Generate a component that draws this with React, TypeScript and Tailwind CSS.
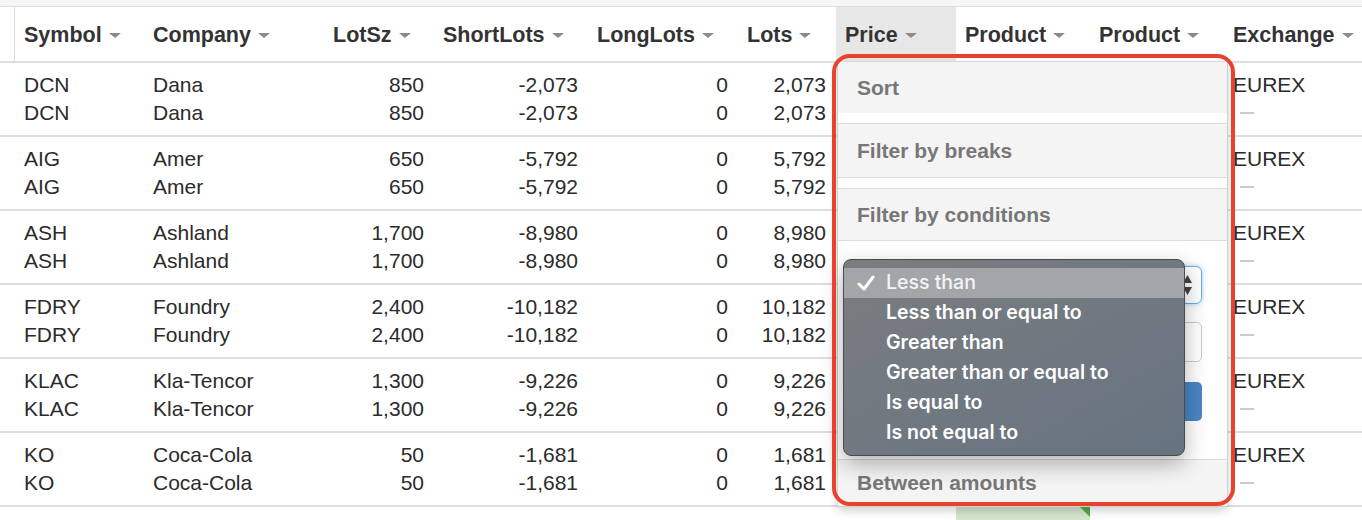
import React from "react";

type Col = { key: string; label: string; w: string; num?: boolean };

const COLS: Col[] = [
  { key: "sym", label: "Symbol", w: "w-[129px]" },
  { key: "co", label: "Company", w: "w-[180px]" },
  { key: "lot", label: "LotSz", w: "w-[110px]", num: true },
  { key: "short", label: "ShortLots", w: "w-[154px]", num: true },
  { key: "long", label: "LongLots", w: "w-[150px]", num: true },
  { key: "lots", label: "Lots", w: "w-[98px]", num: true },
  { key: "price", label: "Price", w: "w-[120px]", num: true },
  { key: "p1", label: "Product", w: "w-[134px]" },
  { key: "p2", label: "Product", w: "w-[134px]" },
  { key: "ex", label: "Exchange", w: "w-[138px]" },
];

type Row = Record<string, string>;

const ROWS: Row[] = [
  { sym: "DCN", co: "Dana", lot: "850", short: "-2,073", long: "0", lots: "2,073" },
  { sym: "AIG", co: "Amer", lot: "650", short: "-5,792", long: "0", lots: "5,792" },
  { sym: "ASH", co: "Ashland", lot: "1,700", short: "-8,980", long: "0", lots: "8,980" },
  { sym: "FDRY", co: "Foundry", lot: "2,400", short: "-10,182", long: "0", lots: "10,182" },
  { sym: "KLAC", co: "Kla-Tencor", lot: "1,300", short: "-9,226", long: "0", lots: "9,226" },
  { sym: "KO", co: "Coca-Cola", lot: "50", short: "-1,681", long: "0", lots: "1,681" },
];

const OPTIONS = [
  "Less than",
  "Less than or equal to",
  "Greater than",
  "Greater than or equal to",
  "Is equal to",
  "Is not equal to",
];

function Caret() {
  return (
    <span className="ml-[7px] inline-block h-0 w-0 border-x-[6px] border-t-[5px] border-x-transparent border-t-[#8a8a8a]" />
  );
}

function HeaderRow() {
  return (
    <div className="flex h-[56px] border-b-2 border-[#dedede] bg-white">
      <div className="w-[15px] shrink-0 border-r border-[#dcdcdc]" />
      {COLS.map((c) => (
        <div
          key={c.key}
          className={`${c.w} flex shrink-0 items-center pl-[9px] pt-[2px] text-[21.5px] font-bold text-[#333] ${
            c.key === "price" ? "bg-[#e7e7e7]" : ""
          }`}
        >
          {c.label}
          <Caret />
        </div>
      ))}
    </div>
  );
}

function Group({ row }: { row: Row }) {
  return (
    <div className="flex border-b-2 border-[#dedede] py-[8px] text-[21px] leading-[28px] text-[#2b2b2b]">
      <div className="w-[15px] shrink-0" />
      {COLS.map((c) => (
        <div
          key={c.key}
          className={`${c.w} shrink-0 ${c.num ? "pr-[10px] text-right" : "pl-[9px]"}`}
        >
          {c.key === "ex" ? (
            <>
              <div>EUREX</div>
              <div className="flex h-[28px] items-center">
                <span className="ml-[7px] h-[2px] w-[14px] bg-[#cacaca]" />
              </div>
            </>
          ) : (
            <>
              <div>{row[c.key] ?? "\u00a0"}</div>
              <div>{row[c.key] ?? "\u00a0"}</div>
            </>
          )}
        </div>
      ))}
    </div>
  );
}

function Section({ title, h }: { title: string; h: string }) {
  return (
    <div className={`${h} flex items-center bg-[#f4f4f4] pl-[19px] text-[21px] font-bold text-[#777]`}>
      {title}
    </div>
  );
}

function FilterMenu() {
  return (
    <div className="absolute left-[837px] top-[62px] z-10 w-[391px] rounded-b-[6px] border border-t-0 border-[#cfcfcf] bg-white shadow-[0_4px_10px_rgba(0,0,0,0.18)]">
      <Section title="Sort" h="h-[51px]" />
      <div className="h-[11px] border-b border-[#dcdcdc]" />
      <Section title="Filter by breaks" h="h-[53px]" />
      <div className="h-[12px] border-y border-[#dcdcdc]" />
      <Section title="Filter by conditions" h="h-[51px]" />
      <div className="flex h-[220px] flex-col border-y border-[#dcdcdc] pl-[8px] pr-[25px]">
        <div className="mt-[25px] flex h-[38px] items-center justify-end rounded-[6px] border border-[#66afe9] pr-[8px] shadow-[0_0_5px_rgba(102,175,233,0.6)]">
          <svg width="11" height="22" viewBox="0 0 11 22">
            <path d="M5.5 1 L10 9 L1 9 Z" fill="#444" />
            <path d="M5.5 21 L10 13 L1 13 Z" fill="#444" />
          </svg>
        </div>
        <div className="mt-[18px] h-[40px] rounded-[5px] border border-[#cccccc]" />
        <div className="mt-[20px] h-[39px] rounded-[5px] bg-[#4a86c5]" />
      </div>
      <Section title="Between amounts" h="h-[46px]" />
    </div>
  );
}

function NativeDropdown() {
  return (
    <div className="absolute left-[843px] top-[259px] z-20 h-[197px] w-[342px] overflow-hidden rounded-[8px] border border-[#4b4b4b] bg-gradient-to-br from-[#7a7d80] to-[#677381] pt-[8px] shadow-[0_8px_22px_rgba(0,0,0,0.3)]">
      {OPTIONS.map((o, i) => (
        <div
          key={o}
          className={`flex h-[30px] items-center text-[19.5px] font-semibold text-white ${
            i === 0 ? "bg-[#a3a6a9]" : ""
          }`}
          style={{ fontFamily: "Inter, 'Open Sans', sans-serif" }}
        >
          <span className="flex w-[42px] justify-center pl-[2px]">
            {i === 0 ? (
              <svg width="18" height="16" viewBox="0 0 18 16">
                <path d="M2 9 L7 14 L16 2" fill="none" stroke="#fff" strokeWidth="3" strokeLinecap="round" strokeLinejoin="round" />
              </svg>
            ) : null}
          </span>
          <span className={i === 0 ? "font-medium text-[#f4f4f4]" : ""}>{o}</span>
        </div>
      ))}
    </div>
  );
}

export default function App() {
  return (
    <div
      className="relative h-[520px] w-[1362px] overflow-hidden bg-white"
      style={{ fontFamily: "'Liberation Sans', Arial, sans-serif" }}
    >
      <div className="h-[7px] border-b border-[#dddddd] bg-[#f6f6f6]" />
      <HeaderRow />
      {ROWS.map((r) => (
        <Group key={r.sym} row={r} />
      ))}
      <div className="flex h-[20px]">
        <div className="w-[956px] shrink-0" />
        <div className="relative w-[134px] shrink-0 bg-[#d6e5cd]">
          <span className="absolute right-0 top-0 h-0 w-0 border-l-[10px] border-t-[10px] border-l-transparent border-t-[#57a84a]" />
        </div>
      </div>
      <FilterMenu />
      <NativeDropdown />
      <div className="pointer-events-none absolute left-[832px] top-[54px] z-30 h-[452px] w-[403px] rounded-[18px] border-[4px] border-[#e8412d]" />
    </div>
  );
}
